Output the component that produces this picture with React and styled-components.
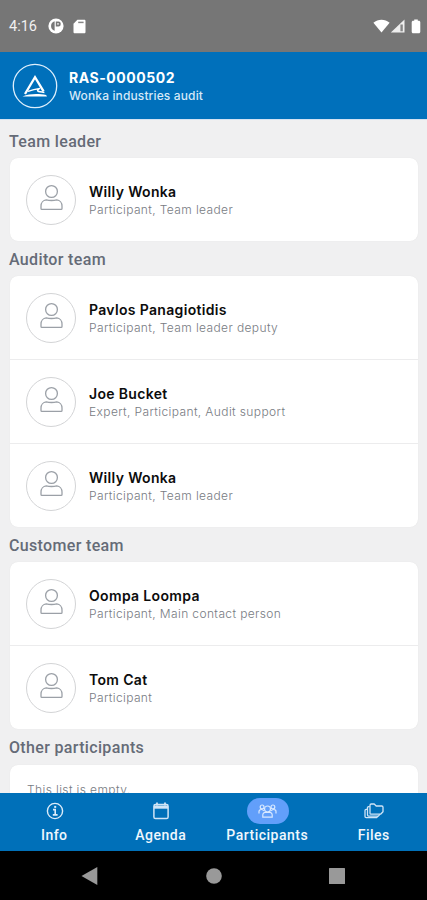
import React from 'react';
import styled, { createGlobalStyle } from 'styled-components';

const GlobalStyle = createGlobalStyle`
  * {
    box-sizing: border-box;
  }

  body {
    margin: 0;
    background: #000;
  }
`;

const Screen = styled.div`
  display: flex;
  flex-direction: column;
  width: 427px;
  height: 900px;
  overflow: hidden;
  background: #f0f0f1;
  font-family: Inter, sans-serif;
`;

const StatusBar = styled.div`
  display: flex;
  align-items: center;
  flex: none;
  height: 52px;
  padding: 0 6px 0 9px;
  background: #767676;
`;

const Clock = styled.span`
  width: 39px;
  padding-top: 1px;
  font-family: Roboto, sans-serif;
  font-size: 14.5px;
  color: #f1f1f1;
`;

const StatusIcon = styled.svg`
  flex: none;
  margin-left: ${props => props.$gap || 0}px;
`;

const Spacer = styled.div`
  flex: 1;
`;

const Header = styled.header`
  display: flex;
  align-items: center;
  flex: none;
  height: 67px;
  padding: 1px 12px 0;
  background: #0070bb;
  color: #fff;
`;

const HeaderText = styled.div`
  margin-left: 11px;
  padding-top: 2px;
`;

const AuditNumber = styled.div`
  font-size: 14px;
  line-height: 18px;
  font-weight: 700;
  letter-spacing: 0.55px;
`;

const AuditName = styled.div`
  font-size: 12px;
  line-height: 18px;
  font-weight: 500;
  letter-spacing: 0.13px;
  color: #d6e9f8;
`;

const Content = styled.main`
  flex: 1;
  min-height: 0;
  overflow: hidden;
  padding: 3px 9px 0;
  border-top: 1px solid #d3e2f2;
`;

const SectionTitle = styled.h2`
  height: ${props => props.$height || 35}px;
  margin: 0;
  font-family: Roboto, sans-serif;
  font-size: 16px;
  line-height: 37px;
  font-weight: 500;
  letter-spacing: 0.34px;
  color: #656b77;
`;

const Card = styled.div`
  margin-left: 1px;
  border-radius: 8px;
  background: #fff;
  box-shadow: 0 0 1px #dcdcdc;
  overflow: hidden;
`;

const Row = styled.div`
  display: flex;
  align-items: center;
  height: 83px;
  padding-left: 16px;

  & + & {
    height: 84px;
    border-top: 1px solid #ececed;
  }
`;

const Avatar = styled.div`
  display: flex;
  align-items: center;
  justify-content: center;
  width: 50px;
  height: 50px;
  padding-bottom: 3px;
  border: 1px solid #d3d4d6;
  border-radius: 50%;
`;

const PersonText = styled.div`
  margin-left: 13px;
  padding-top: 2px;
`;

const PersonName = styled.div`
  font-size: 14px;
  line-height: 18px;
  font-weight: 600;
  letter-spacing: 0.33px;
  color: #0c0c0c;
`;

const PersonRole = styled.div`
  font-size: 12px;
  line-height: 18px;
  font-weight: 300;
  letter-spacing: 0.38px;
  color: #777b82;
`;

const EmptyText = styled.div`
  height: 60px;
  padding: 16px 17px;
  font-size: 12px;
  line-height: 18px;
  font-weight: 300;
  letter-spacing: 0.38px;
  color: #777b82;
`;

const TabBar = styled.nav`
  display: grid;
  grid-template-columns: repeat(4, 1fr);
  flex: none;
  height: 58px;
  padding: 5px 0 0 1px;
  background: #0070b9;
`;

const Tab = styled.div`
  display: flex;
  flex-direction: column;
  align-items: center;
`;

const TabIcon = styled.div`
  display: flex;
  align-items: center;
  justify-content: center;
  width: 42px;
  height: 26px;
  margin-left: 1px;
  border-radius: 13px;
  background: ${props => (props.$active ? '#629ffa' : 'transparent')};
`;

const TabLabel = styled.span`
  font-family: Roboto, sans-serif;
  font-size: 14px;
  line-height: 22px;
  font-weight: 500;
  letter-spacing: 0.5px;
  color: #eff7fd;
`;

const SystemBar = styled.div`
  display: flex;
  align-items: center;
  justify-content: space-between;
  flex: none;
  height: 49px;
  padding: 0 82px 0 81px;
  background: #000;
`;

const PersonIcon = () => (
  <svg width="24" height="28" viewBox="0 0 24 28" fill="none" stroke="#9ba0a7" strokeWidth="1.3">
    <circle cx="12.5" cy="7.5" r="5.9" />
    <path d="M7.2 15.9c3.2.7 7.4.7 10.6 0C20.8 16.2 23 18.8 23 22v2.4a.9.9 0 0 1-.9.9H2.9a.9.9 0 0 1-.9-.9V22c0-3.2 2.2-5.8 5.2-6.1z" />
  </svg>
);

const InfoIcon = () => (
  <svg width="18" height="18" viewBox="0 0 18 18" fill="none" stroke="#dcecf9" strokeWidth="1.4">
    <circle cx="9" cy="9" r="7.6" />
    <path d="M7 7.6h2.2v5M6.8 12.9h4.8" strokeWidth="1.6" />
    <path d="M8.2 4.9h2" strokeWidth="2" />
  </svg>
);

const CalendarIcon = () => (
  <svg width="18" height="18" viewBox="0 0 18 18" fill="none" stroke="#cfe4f6" strokeWidth="1.5">
    <rect x="1.9" y="2.6" width="14.2" height="14" rx="1.6" />
    <path d="M2 5.1h14" strokeWidth="3.2" />
    <path d="M5 .4v3M13 .4v3" strokeWidth="1.8" />
  </svg>
);

const PeopleIcon = () => (
  <svg width="19" height="16" viewBox="0 0 19 16" fill="none" stroke="#d9e9ff" strokeWidth="1.2">
    <circle cx="9.5" cy="6" r="3" />
    <path d="M6.6 9.4h5.8c1.2.5 1.8 1.3 1.8 2.4v2.4H4.8v-2.4c0-1.1.6-1.9 1.8-2.4z" />
    <circle cx="4.1" cy="3.9" r="1.9" />
    <circle cx="14.9" cy="3.9" r="1.9" />
    <path d="M1 10.4V8.6C1 7.2 1.9 6.5 3.4 6.5c1 0 1.8.5 2.4 1.3M18 10.4V8.6c0-1.4-.9-2.1-2.4-2.1-1 0-1.8.5-2.4 1.3" />
  </svg>
);

const FoldersIcon = () => (
  <svg width="20" height="16" viewBox="0 0 20 16" fill="none" stroke="#cfe4f6" strokeWidth="1.3" strokeLinejoin="round">
    <path d="M6 2.2C6 1.4 6.5 1 7.2 1h3l2 2h5.6c.8 0 1.2.5 1.2 1.2v4.6l-2.4 2.4H6.8c-.5 0-.8-.4-.8-.9z" />
    <path d="M5.8 3.6H4.6c-.7 0-1.1.4-1.1 1.1v7.4c0 .6.4 1 1 1h9.8l1.7-1.9" />
    <path d="M3.3 6.4H2.1C1.4 6.4 1 6.8 1 7.5V13.6c0 .7.4 1.1 1.1 1.1h10.4l1.5-1.6" />
  </svg>
);

const AuditLogo = () => (
  <svg width="46" height="46" viewBox="0 0 46 46" fill="none" stroke="#fff">
    <circle cx="23" cy="23" r="21.7" strokeWidth="1.3" stroke="#deeffc" />
    <path d="M31.6 28.4 23 14.2 13 31" strokeWidth="2.3" />
    <path d="M16 28.4c4.8-1.9 8.6-2.6 12-3-4.6 2.6-2.4 3.5 4.4 4" strokeWidth="1.5" />
    <path d="M10.5 33.4c7.4-3 17-2.8 23.6-1.3l.9 1.3z" fill="#fff" stroke="none" />
  </svg>
);

const sections = [
  {
    title: 'Team leader',
    people: [{ name: 'Willy Wonka', role: 'Participant, Team leader' }],
  },
  {
    title: 'Auditor team',
    people: [
      { name: 'Pavlos Panagiotidis', role: 'Participant, Team leader deputy' },
      { name: 'Joe Bucket', role: 'Expert, Participant, Audit support' },
      { name: 'Willy Wonka', role: 'Participant, Team leader' },
    ],
  },
  {
    title: 'Customer team',
    people: [
      { name: 'Oompa Loompa', role: 'Participant, Main contact person' },
      { name: 'Tom Cat', role: 'Participant' },
    ],
  },
  { title: 'Other participants', people: [], titleHeight: 36 },
];

const tabs = [
  { label: 'Info', icon: <InfoIcon /> },
  { label: 'Agenda', icon: <CalendarIcon /> },
  { label: 'Participants', icon: <PeopleIcon />, active: true },
  { label: 'Files', icon: <FoldersIcon /> },
];

const App = () => (
  <>
    <GlobalStyle />
    <Screen>
      <StatusBar>
        <Clock>4:16</Clock>
        <StatusIcon width="16" height="16" viewBox="0 0 16 16">
          <circle cx="8" cy="8" r="7.6" fill="#fff" />
          <path d="M6.6 3.3A4.9 4.9 0 0 0 6.6 12.7z" fill="#777" />
          <path d="M7.8 3.4h2.7a2.2 2.2 0 0 1 2.2 2.2v.6a2.2 2.2 0 0 1-2.2 2.2H7.8z" fill="#777" />
          <path d="M9.4 5h1.2v1.7H9.4z" fill="#fff" />
        </StatusIcon>
        <StatusIcon $gap={9} width="13" height="15" viewBox="0 0 13 15">
          <path d="M4.4.8h6.8c.8 0 1.3.5 1.3 1.3v10.8c0 .8-.5 1.3-1.3 1.3H1.8C1 14.2.5 13.7.5 12.9V4.8z" fill="#fff" />
          <path d="M5.2 3.4h5.4" stroke="#858585" strokeWidth="1.5" />
        </StatusIcon>
        <Spacer />
        <StatusIcon width="17" height="14" viewBox="0 0 17 14">
          <path d="M8.5 13.6.4 3.8C5-.3 12-.3 16.6 3.8z" fill="#fff" />
        </StatusIcon>
        <StatusIcon width="15" height="14" viewBox="0 0 15 14">
          <path d="M14.5.4v13.2H.8z" fill="#eee" />
          <path d="M10.4 5.5h2.4v6.8h-2.4z" fill="#858585" />
        </StatusIcon>
        <StatusIcon $gap={6} width="10" height="15" viewBox="0 0 10 15">
          <path d="M3.2.4h3.6v1.4h1c.9 0 1.5.6 1.5 1.5v9.5c0 .9-.6 1.5-1.5 1.5H2.2c-.9 0-1.5-.6-1.5-1.5V3.3c0-.9.6-1.5 1.5-1.5h1z" fill="#fff" />
        </StatusIcon>
      </StatusBar>

      <Header>
        <AuditLogo />
        <HeaderText>
          <AuditNumber>RAS-0000502</AuditNumber>
          <AuditName>Wonka industries audit</AuditName>
        </HeaderText>
      </Header>

      <Content>
        {sections.map(section => (
          <section key={section.title}>
            <SectionTitle $height={section.titleHeight}>{section.title}</SectionTitle>
            <Card>
              {section.people.length > 0 ? (
                section.people.map(person => (
                  <Row key={person.name}>
                    <Avatar>
                      <PersonIcon />
                    </Avatar>
                    <PersonText>
                      <PersonName>{person.name}</PersonName>
                      <PersonRole>{person.role}</PersonRole>
                    </PersonText>
                  </Row>
                ))
              ) : (
                <EmptyText>This list is empty.</EmptyText>
              )}
            </Card>
          </section>
        ))}
      </Content>

      <TabBar>
        {tabs.map(tab => (
          <Tab key={tab.label}>
            <TabIcon $active={tab.active}>{tab.icon}</TabIcon>
            <TabLabel>{tab.label}</TabLabel>
          </Tab>
        ))}
      </TabBar>

      <SystemBar>
        <svg width="17" height="20" viewBox="0 0 17 20">
          <path d="M16.3 1v18L.5 10z" fill="#999" />
        </svg>
        <svg width="16" height="16" viewBox="0 0 16 16">
          <circle cx="8" cy="8" r="7.8" fill="#999" />
        </svg>
        <svg width="16" height="16" viewBox="0 0 16 16">
          <rect width="16" height="16" rx="0.5" fill="#999" />
        </svg>
      </SystemBar>
    </Screen>
  </>
);

export default App;
